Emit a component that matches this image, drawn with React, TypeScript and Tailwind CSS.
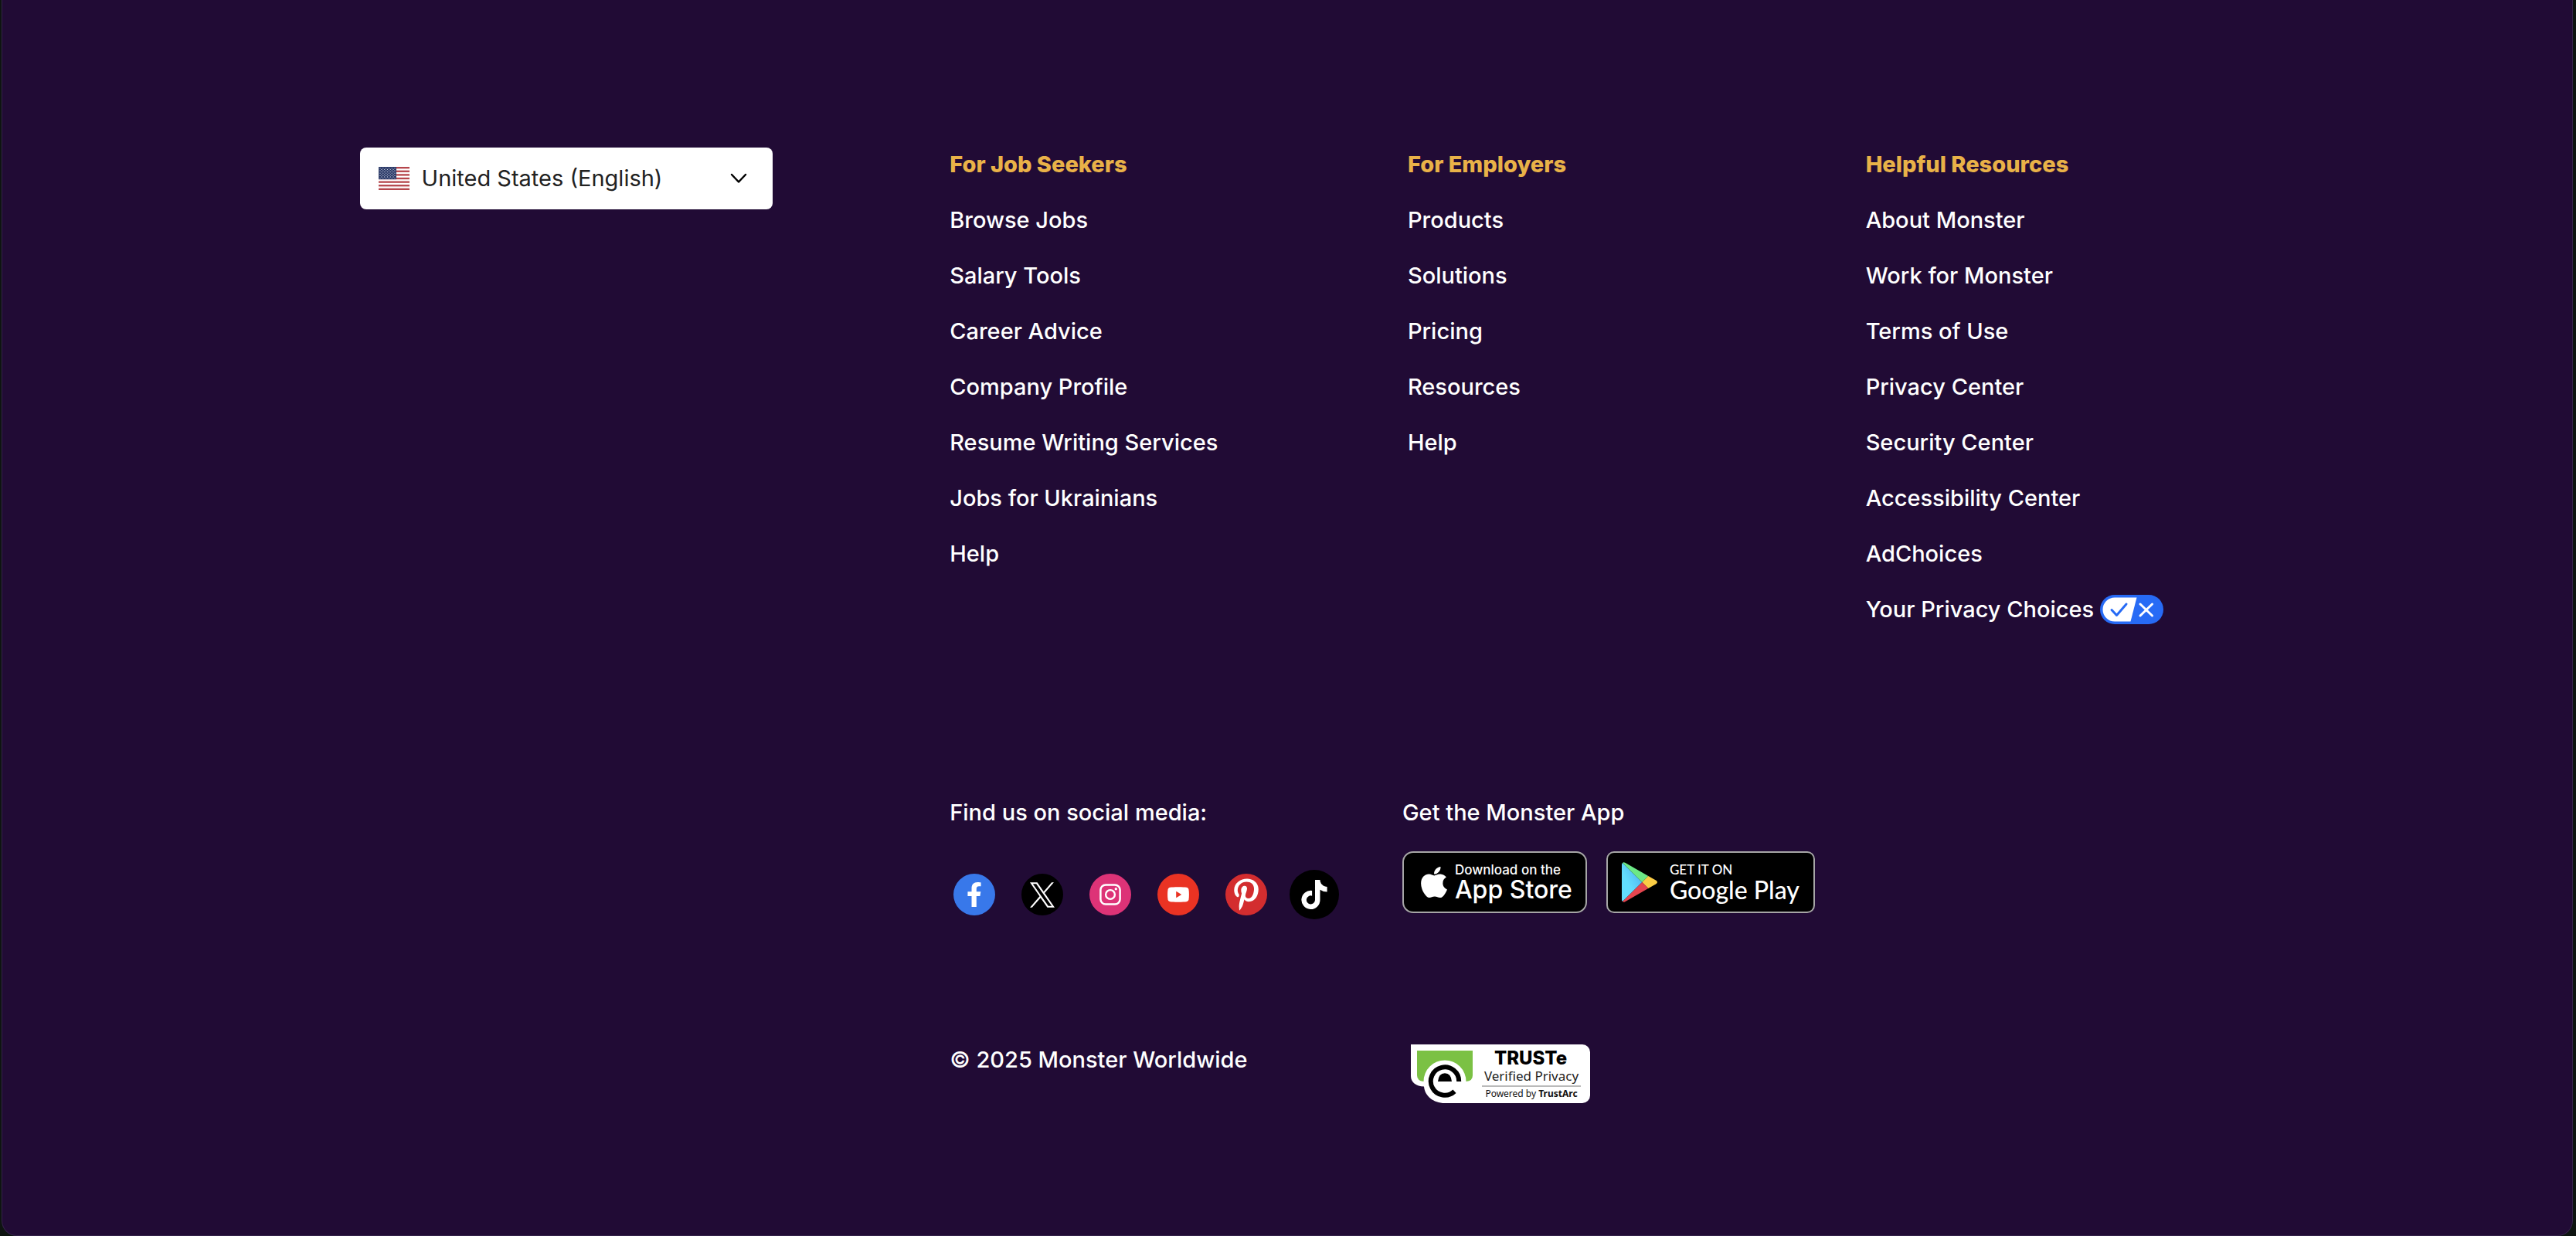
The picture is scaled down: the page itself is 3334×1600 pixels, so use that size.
import type { ReactNode } from "react";
import { FaApple, FaFacebookF, FaPinterestP, FaTiktok } from "react-icons/fa";

const seekers = [
  "Browse Jobs",
  "Salary Tools",
  "Career Advice",
  "Company Profile",
  "Resume Writing Services",
  "Jobs for Ukrainians",
  "Help",
];
const employers = ["Products", "Solutions", "Pricing", "Resources", "Help"];
const resources = [
  "About Monster",
  "Work for Monster",
  "Terms of Use",
  "Privacy Center",
  "Security Center",
  "Accessibility Center",
  "AdChoices",
];

const stars = Array.from({ length: 9 }, (_, row) =>
  Array.from({ length: row % 2 ? 5 : 6 }, (_, i) => ({
    x: (row % 2 ? 3.9 : 2) + i * 3.8,
    y: 1.8 + row * 1.6,
  })),
).flat();

function Flag() {
  return (
    <svg viewBox="0 0 40 30" className="h-[30px] w-10" aria-hidden="true">
      <rect width="40" height="30" fill="#fff" />
      {[0, 1, 2, 3, 4, 5, 6].map((i) => (
        <rect key={i} y={(i * 60) / 13} width="40" height={30 / 13} fill="#b5464c" />
      ))}
      <rect width="23" height="16.15" fill="#2b3a68" />
      {stars.map((s, i) => (
        <circle key={i} cx={s.x} cy={s.y} r="0.65" fill="#c3c9da" />
      ))}
    </svg>
  );
}

function PrivacyPill() {
  return (
    <svg viewBox="0 0 82 38" className="h-[38px] w-[82px]" aria-hidden="true">
      <rect width="82" height="38" rx="19" fill="#276bf5" />
      <path d="M19 3.5H47.5L39.5 34.5H19a15.5 15.5 0 0 1 0-31Z" fill="#fff" />
      <path d="M15 19.5l6.5 7L34 12" fill="none" stroke="#276bf5" strokeWidth="3" strokeLinecap="round" strokeLinejoin="round" />
      <path d="M52 12l15.5 15M67.5 12L52 27" fill="none" stroke="#fff" strokeWidth="3" strokeLinecap="round" />
    </svg>
  );
}

function LinkColumn({ title, links, children }: { title: string; links: string[]; children?: ReactNode }) {
  return (
    <nav aria-label={title}>
      <h2 className="font-extrabold text-[#e9b248]">{title}</h2>
      <ul>
        {links.map((link) => (
          <li key={link}>
            <a href="#">{link}</a>
          </li>
        ))}
        {children}
      </ul>
    </nav>
  );
}

function Social({ label, className, children }: { label: string; className: string; children: ReactNode }) {
  return (
    <li className="flex size-16 items-center justify-center">
      <a href="#" aria-label={label} className={`flex items-center justify-center rounded-full text-white ${className}`}>
        {children}
      </a>
    </li>
  );
}

function XLogo() {
  return (
    <svg viewBox="0 0 1200 1227" className="h-[33px] w-8" fill="currentColor" aria-hidden="true">
      <path d="M714.163 519.284L1160.89 0H1055.03L667.137 450.887L357.328 0H0L468.492 681.821L0 1226.37H105.866L515.491 750.218L842.672 1226.37H1200L714.137 519.284H714.163ZM569.165 687.828L521.697 619.934L144.011 79.6944H306.615L611.412 515.685L658.88 583.579L1055.08 1150.3H892.476L569.165 687.854V687.828Z" />
    </svg>
  );
}

function InstagramLogo() {
  return (
    <svg viewBox="0 0 28 28" className="size-7" fill="none" stroke="currentColor" aria-hidden="true">
      <rect x="1.4" y="1.4" width="25.2" height="25.2" rx="6.6" strokeWidth="2.5" />
      <circle cx="14" cy="14" r="5.9" strokeWidth="2.4" />
      <circle cx="21.3" cy="6.7" r="1.7" fill="currentColor" stroke="none" />
    </svg>
  );
}

function YouTubeLogo() {
  return (
    <svg viewBox="0 0 28 20" className="h-5 w-7" aria-hidden="true">
      <path
        d="M14 .3c5 0 8.8.2 10.6.5 1.6.3 2.6 1.3 2.9 2.9.3 1.9.4 4 .4 6.3s-.1 4.400-.4 6.300c-.3 1.600-1.300 2.600-2.900 2.900-1.800.3-5.600.5-10.600.5s-8.800-.2-10.600-.5C1.800 18.900.8 17.900.5 16.300.2 14.400.1 12.300.1 10S.2 5.600.5 3.700C.8 2.100 1.800 1.100 3.400.8 5.200.5 9 .3 14 .3Z"
        fill="#fff"
      />
      <path d="M11.2 5.7v8.600l7-4.300Z" fill="#ea3323" />
    </svg>
  );
}

function PlayLogo() {
  return (
    <svg viewBox="0 0 46 52" className="h-[52px] w-[46px]" aria-hidden="true">
      <defs>
        <linearGradient id="play-blue" x1="1" y1="0" x2="0" y2="1">
          <stop offset="0" stopColor="#4aa7ee" />
          <stop offset="0.6" stopColor="#62dcfd" />
          <stop offset="1" stopColor="#62e0ff" />
        </linearGradient>
      </defs>
      <path d="M1 1Q0 1.700 0 3.400V48.600Q0 50.300 1 51L26.300 26Z" fill="url(#play-blue)" />
      <path d="M1 1Q2.200-.4 4.300.8L34.300 18 26.300 26Z" fill="#6ce886" />
      <path d="M34.300 18L44 23.500Q48 26 44 28.500L34.300 34 26.300 26Z" fill="#fbcd45" />
      <path d="M1 51Q2.200 52.400 4.300 51.200L34.300 34 26.300 26Z" fill="#e5454f" />
    </svg>
  );
}

function TrusteSeal() {
  return (
    <svg viewBox="0 0 232 76" className="h-[76px] w-[232px]" role="img" aria-label="TRUSTe Verified Privacy, powered by TrustArc">
      <path d="M0 0H222a10 10 0 0 1 10 10V66a10 10 0 0 1-10 10H44C29 76 18 66.500 17 54.500 7 54.500 0 49 0 41Z" fill="#fff" />
      <path d="M8 8H80V40Q80 47.500 71.500 48A27.500 27.500 0 0 0 16.500 48Q8 47 8 40Z" fill="#7bc144" />
      <path d="M62.200 48A18.200 18.200 0 1 0 56.500 60.800" fill="none" stroke="#000" strokeWidth="6" />
      <path d="M35 48Q36 37.200 44 37.200T53 48Z" fill="#000" />
      <text x="155" y="26" textAnchor="middle" fontFamily="Inter, sans-serif" fontWeight="800" fontSize="24" fill="#000">
        TRUSTe
      </text>
      <text x="156" y="47" textAnchor="middle" fontFamily="'Noto Sans', sans-serif" fontWeight="400" fontSize="17" fill="#222">
        Verified Privacy
      </text>
      <path d="M92 54H220" stroke="#777" strokeWidth="1" />
      <text x="156" y="68" textAnchor="middle" fontFamily="'Noto Sans', sans-serif" fontWeight="400" fontSize="12" fill="#111">
        Powered by <tspan fontWeight="700">TrustArc</tspan>
      </text>
    </svg>
  );
}

export default function App() {
  return (
    <div className="min-h-screen bg-[#0e1411] pr-1 pl-[2px]">
      <footer className="min-h-screen rounded-b-[20px] border-x border-b border-[#34224a] bg-[#210b35] px-[13.9%] pt-[177px] pb-40 font-['Inter',sans-serif] text-[29px] font-medium text-white">
        <div className="grid grid-cols-[764fr_593fr_593fr_452fr] leading-[72px]">
          <div className="pt-[14px]">
            <div className="relative w-[70%]">
              <select
                aria-label="Country and language"
                className="h-20 w-full appearance-none rounded-lg bg-white pr-16 pl-20 leading-10 font-normal text-[#222]"
              >
                <option>United States (English)</option>
              </select>
              <span className="pointer-events-none absolute inset-y-0 left-6 flex items-center">
                <Flag />
              </span>
              <span className="pointer-events-none absolute inset-y-0 right-8 flex items-center">
                <svg viewBox="0 0 24 14" className="h-[14px] w-6" aria-hidden="true">
                  <path d="M3 2l9 9.5L21 2" fill="none" stroke="#000" strokeWidth="2.5" strokeLinecap="round" strokeLinejoin="round" />
                </svg>
              </span>
            </div>
          </div>
          <LinkColumn title="For Job Seekers" links={seekers} />
          <LinkColumn title="For Employers" links={employers} />
          <LinkColumn title="Helpful Resources" links={resources}>
            <li>
              <a href="#" className="flex items-center gap-2 whitespace-nowrap">
                Your Privacy Choices
                <PrivacyPill />
              </a>
            </li>
          </LinkColumn>
        </div>

        <div className="mt-[207px] grid grid-cols-[764fr_586fr_1052fr] leading-10">
          <section className="col-start-2">
            <p>Find us on social media:</p>
            <ul className="mt-[54px] flex gap-6">
              <Social label="Facebook" className="size-[54px] bg-[#3878ea]">
                <FaFacebookF className="size-8" />
              </Social>
              <Social label="X" className="size-[54px] bg-black">
                <XLogo />
              </Social>
              <Social label="Instagram" className="size-[54px] bg-[#dd3377]">
                <InstagramLogo />
              </Social>
              <Social label="YouTube" className="size-[54px] bg-[#ea3323]">
                <YouTubeLogo />
              </Social>
              <Social label="Pinterest" className="size-[54px] bg-[#d32d2f]">
                <FaPinterestP className="size-[42px]" />
              </Social>
              <Social label="TikTok" className="size-16 bg-black">
                <FaTiktok className="size-[38px]" />
              </Social>
            </ul>
          </section>
          <section>
            <p>Get the Monster App</p>
            <div className="mt-[30px] flex gap-[25px]">
              <a href="#" className="flex h-20 w-[239px] items-center gap-1 rounded-[14px] border-2 border-[#a6a6a6] bg-black pl-4">
                <FaApple className="size-[46px] shrink-0" />
                <span className="flex flex-col whitespace-nowrap">
                  <span className="text-[17px] leading-5">Download on the</span>
                  <span className="text-[32px] leading-8">App Store</span>
                </span>
              </a>
              <a href="#" className="flex h-20 w-[270px] items-center gap-4 rounded-[10px] border-2 border-[#a6a6a6] bg-black pl-[18px]">
                <PlayLogo />
                <span className="flex flex-col font-['Lato',sans-serif] whitespace-nowrap">
                  <span className="text-[17px] leading-5">GET IT ON</span>
                  <span className="text-[32px] leading-8">Google Play</span>
                </span>
              </a>
            </div>
          </section>
        </div>

        <div className="mt-[162px] grid grid-cols-[764fr_593fr_1045fr] leading-10">
          <p className="col-start-2">© 2025 Monster Worldwide</p>
          <a href="#" className="justify-self-start pl-1">
            <TrusteSeal />
          </a>
        </div>
      </footer>
    </div>
  );
}
